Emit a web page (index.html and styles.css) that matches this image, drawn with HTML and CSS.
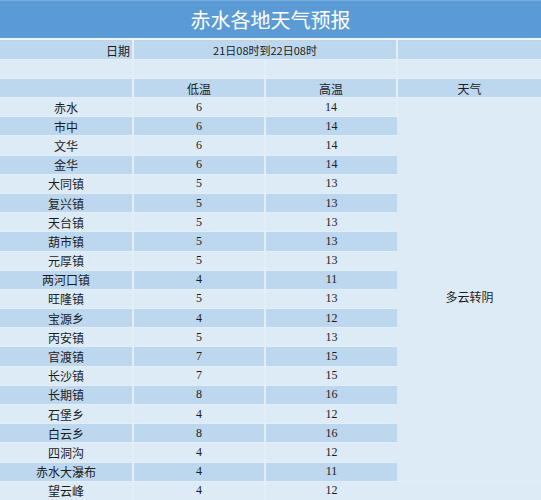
FILE: index.html
```html
<!DOCTYPE html>
<html lang="zh-CN">
<head>
<meta charset="utf-8">
<link rel="stylesheet" href="styles.css">
</head>
<body>
<div class="sheet">
  <div class="title">赤水各地天气预报</div>
  <table class="grid">
    <colgroup>
      <col class="c1"><col class="c2"><col class="c3"><col class="c4">
    </colgroup>
    <tbody>
      <tr class="dark meta">
        <td class="right">日期</td>
        <td colspan="2" class="center">21日08时到22日08时</td>
        <td></td>
      </tr>
      <tr class="light meta"><td></td><td></td><td></td><td></td></tr>
      <tr class="dark meta">
        <td></td><td>低温</td><td>高温</td><td>天气</td>
      </tr>
      <tr class="light"><td>赤水</td><td class="num">6</td><td class="num">14</td><td class="weather" rowspan="20">多云转阴</td></tr>
      <tr class="dark"><td>市中</td><td class="num">6</td><td class="num">14</td></tr>
      <tr class="light"><td>文华</td><td class="num">6</td><td class="num">14</td></tr>
      <tr class="dark"><td>金华</td><td class="num">6</td><td class="num">14</td></tr>
      <tr class="light"><td>大同镇</td><td class="num">5</td><td class="num">13</td></tr>
      <tr class="dark"><td>复兴镇</td><td class="num">5</td><td class="num">13</td></tr>
      <tr class="light"><td>天台镇</td><td class="num">5</td><td class="num">13</td></tr>
      <tr class="dark"><td>葫市镇</td><td class="num">5</td><td class="num">13</td></tr>
      <tr class="light"><td>元厚镇</td><td class="num">5</td><td class="num">13</td></tr>
      <tr class="dark"><td>两河口镇</td><td class="num">4</td><td class="num">11</td></tr>
      <tr class="light"><td>旺隆镇</td><td class="num">5</td><td class="num">13</td></tr>
      <tr class="dark"><td>宝源乡</td><td class="num">4</td><td class="num">12</td></tr>
      <tr class="light"><td>丙安镇</td><td class="num">5</td><td class="num">13</td></tr>
      <tr class="dark"><td>官渡镇</td><td class="num">7</td><td class="num">15</td></tr>
      <tr class="light"><td>长沙镇</td><td class="num">7</td><td class="num">15</td></tr>
      <tr class="dark"><td>长期镇</td><td class="num">8</td><td class="num">16</td></tr>
      <tr class="light"><td>石堡乡</td><td class="num">4</td><td class="num">12</td></tr>
      <tr class="dark"><td>白云乡</td><td class="num">8</td><td class="num">16</td></tr>
      <tr class="light"><td>四洞沟</td><td class="num">4</td><td class="num">12</td></tr>
      <tr class="dark"><td>赤水大瀑布</td><td class="num">4</td><td class="num">11</td></tr>
      <tr class="light"><td>望云峰</td><td class="num">4</td><td class="num">12</td></tr>
    </tbody>
  </table>
</div>
</body>
</html>
```
FILE: styles.css
```css
html, body {
  margin: 0;
  padding: 0;
  background: #ddebf7;
}
.sheet {
  width: 541px;
  overflow: hidden;
  font-family: "Noto Sans CJK SC", "Noto Sans", sans-serif;
  color: #1c1c1c;
}
.title {
  height: 37px;
  border-top: 1px solid #78ade0;
  border-bottom: 2px solid #eef5fc;
  background: #5b9bd5;
  color: #ffffff;
  font-size: 20px;
  line-height: 37px;
  text-align: center;
}
.grid {
  width: 541px;
  table-layout: fixed;
  border-collapse: collapse;
  border-top: 1px solid #c3d2e2;
  font-size: 12px;
}
.c1 { width: 133px; }
.c2 { width: 132px; }
.c3 { width: 132px; }
.c4 { width: 144px; }
.grid td {
  height: 18.2px;
  padding: 0;
  text-align: center;
  vertical-align: middle;
  line-height: 13px;
  border-right: 2px solid #e4eef9;
  border-bottom: 1px solid #e4eef9;
  white-space: nowrap;
}
.grid tr.meta td { height: 18px; }
.grid td:last-child { border-right: none; }
.dark td { background: #bdd7ee; }
.light td { background: #ddebf7; }
.grid td.right { text-align: right; padding-right: 2px; }
.grid td.center { text-align: center; font-size: 11px; }
.grid td.num { font-family: "Liberation Serif", "DejaVu Serif", serif; font-size: 12px; }
.grid td.weather {
  background: #ddebf7;
  border-right: none;
  padding-top: 14px;
}
```
